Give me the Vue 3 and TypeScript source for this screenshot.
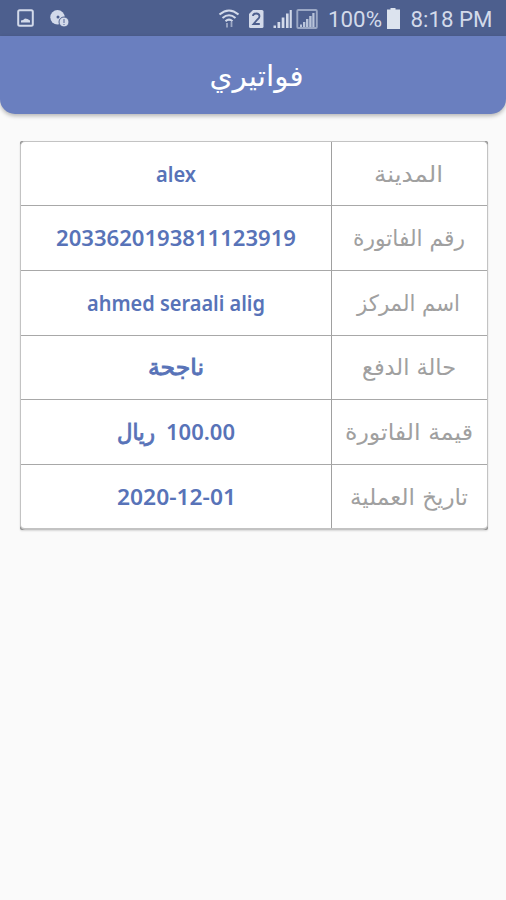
<script setup lang="ts">
interface Phrase {
  text: string
  width: number
  arabic?: boolean
}

interface Row {
  label: Phrase
  value: Phrase[]
}

const rows: Row[] = [
  { label: { text: 'المدينة', width: 69 }, value: [{ text: 'alex', width: 40 }] },
  { label: { text: 'رقم الفاتورة', width: 112 }, value: [{ text: '2033620193811123919', width: 240 }] },
  { label: { text: 'اسم المركز', width: 103 }, value: [{ text: 'ahmed seraali alig', width: 178 }] },
  { label: { text: 'حالة الدفع', width: 94 }, value: [{ text: 'ناجحة', width: 56, arabic: true }] },
  {
    label: { text: 'قيمة الفاتورة', width: 128 },
    value: [
      { text: '100.00', width: 69 },
      { text: 'ريال', width: 38, arabic: true },
    ],
  },
  { label: { text: 'تاريخ العملية', width: 118 }, value: [{ text: '2020-12-01', width: 119 }] },
]
</script>

<template>
  <main class="screen">
    <div class="status">
      <svg class="icons-left" width="54" height="20" viewBox="0 0 54 20">
        <rect x="1.2" y="1.2" width="14.6" height="15.6" rx="1.5" fill="none" stroke="#d3daea" stroke-width="2" />
        <path d="M4 13.500V11.500l2-.5 2-1.500 2.500.5L13 11.500v2z" fill="#d3daea" />
        <circle cx="40.5" cy="8.3" r="7.2" fill="#d3daea" />
        <circle cx="41" cy="8" r="1.5" fill="#4d5f8e" />
        <circle cx="47" cy="13" r="5" fill="#d3daea" stroke="#4d5f8e" stroke-width="1" />
        <path d="M47 10v4M47 15v1" stroke="#7887ae" stroke-width="1.4" />
      </svg>
      <svg class="icons-right" width="102" height="22" viewBox="0 0 102 22">
        <g fill="none" stroke="#d3daea" stroke-width="2.100">
          <path d="M.5 5.500Q10-2.500 19.500 5.500M3.500 9Q10 3.500 16.500 9M6.500 12.200Q10 9 13.500 12.200" />
          <path d="M8 14v4.500M12.500 13v5" stroke-width="1.800" opacity=".6" />
        </g>
        <path d="M34 1h9a1.500 1.500 0 0 1 1.500 1.500v15A1.500 1.500 0 0 1 43 19H31.500a1.500 1.500 0 0 1-1.500-1.500V5z" fill="#d3daea" />
        <path d="M34 7q0-2.500 3.200-2.500T40.500 7.200q0 1.500-2 3.300L34.500 15h6.300" fill="none" stroke="#4d5f8e" stroke-width="1.800" />
        <path d="M54.500 16.500h2.500V19h-2.500zM58.500 13h2.700v6h-2.700zM62.700 8.500h2.700V19h-2.700zM67 4.500h2.600V19H67zM70.700 1h2.100v18h-2.100z" fill="#d3daea" />
        <rect x="78.300" y="1" width="19.500" height="18" rx="1" fill="none" stroke="#9ba8c5" stroke-width="1.900" />
        <path d="M81 15.500h2V18h-2zM84 13h2.300v5H84zM87 10h2.400v8H87zM90.200 7h2.400v11h-2.400zM93.300 4h2.200v14h-2.200z" fill="#b9c4da" />
      </svg>
      <svg class="clock" width="178" height="36" viewBox="0 0 178 36">
        <text class="status-text" x="0" y="27" textLength="54" lengthAdjust="spacingAndGlyphs">100%</text>
        <path d="M59 9.500h3.500V8h5v1.500H72V29H59z" fill="#dce3ee" />
        <text class="status-text" x="82.500" y="27" textLength="82" lengthAdjust="spacingAndGlyphs">8:18 PM</text>
      </svg>
    </div>
    <header class="header">
      <svg class="title" width="93" height="44" viewBox="0 0 93 44">
        <text x="46.500" y="31" text-anchor="middle" textLength="94" lengthAdjust="spacingAndGlyphs" direction="rtl">فواتيري</text>
      </svg>
    </header>
    <div class="frame">
      <section class="table">
        <div v-for="row in rows" :key="row.label.text" class="row">
          <div class="cell value">
            <svg
              v-for="part in row.value"
              :key="part.text"
              :class="{ arabic: part.arabic }"
              :width="part.width"
              height="36"
            >
              <text
                :x="part.width / 2"
                y="26"
                text-anchor="middle"
                :textLength="part.width"
                lengthAdjust="spacingAndGlyphs"
              >{{ part.text }}</text>
            </svg>
          </div>
          <div class="cell label">
            <svg :width="row.label.width" height="36">
              <text
                :x="row.label.width / 2"
                y="26"
                text-anchor="middle"
                :textLength="row.label.width"
                lengthAdjust="spacingAndGlyphs"
              >{{ row.label.text }}</text>
            </svg>
          </div>
        </div>
      </section>
    </div>
  </main>
</template>

<style>
body {
  margin: 0;
  background: #fafafa;
}
</style>

<style scoped>
.screen {
  height: 900px;
  background: #fafafa;
  font-family: "DejaVu Sans", sans-serif;
}

svg {
  display: block;
  flex: none;
  overflow: visible;
}

.status {
  display: flex;
  height: 36px;
  background: #4d5f8e;
}

.icons-left {
  margin: 9px 0 0 17px;
}

.icons-right {
  margin: 9px 0 0 148px;
}

.clock {
  margin-left: 7px;
}

.status-text {
  font: 22.5px Roboto, sans-serif;
  fill: #d3daea;
}

.header {
  display: flex;
  justify-content: center;
  box-sizing: border-box;
  height: 78px;
  padding: 19px 0 0 6px;
  border-radius: 0 0 15px 15px;
  background: #6a7fbf;
  box-shadow: 0 2px 4px rgba(0, 0, 0, 0.28);
}

.title text {
  font-size: 29px;
  fill: #fff;
}

.frame {
  margin: 27px 18px 0 20px;
  background: #8e8e8e;
  border-radius: 2px;
  box-shadow: 0 1px 2px rgba(0, 0, 0, 0.14);
}

.table {
  display: grid;
  grid-template-rows: 63px repeat(4, 64.75px) 64px;
  box-sizing: border-box;
  height: 389px;
  border: 1px solid #c3c3c3;
  border-bottom-width: 2px;
  border-radius: 5px;
  background: #fff;
  overflow: hidden;
}

.row {
  display: grid;
  grid-template-columns: 311px 1fr;
}

.row + .row .cell {
  border-top: 1px solid #a8a8a8;
}

.cell {
  display: flex;
  align-items: center;
  justify-content: center;
}

.value {
  gap: 11px;
  direction: rtl;
  border-right: 1px solid #a0a0a0;
}

.value svg {
  direction: ltr;
}

.value text {
  font: 600 22px "Noto Sans", sans-serif;
  fill: #5873b8;
}

.value .arabic text {
  direction: rtl;
  font: 23px "DejaVu Sans", sans-serif;
  stroke: #5873b8;
  stroke-width: 0.9px;
}

.label {
  padding-right: 2px;
}

.label text {
  direction: rtl;
  font-size: 22.5px;
  fill: #a0a0a0;
}
</style>
